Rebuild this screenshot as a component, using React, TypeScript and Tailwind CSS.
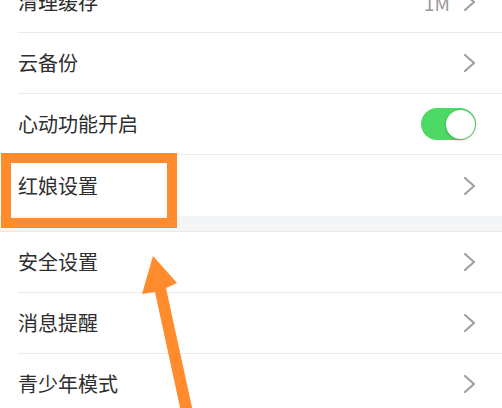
import React from 'react'

const font = { fontFamily: '"Noto Sans CJK SC", "Noto Sans", sans-serif' }

function Chevron() {
  return (
    <svg width="13" height="20" viewBox="0 0 13 20" className="shrink-0">
      <polyline points="2,2 11,10 2,18" fill="none" stroke="#a0a0a0" strokeWidth="2.2" strokeLinecap="round" strokeLinejoin="round" />
    </svg>
  )
}

function Toggle() {
  return (
    <div className="w-[55px] h-[32px] rounded-full bg-[#4cd964] p-[1.5px] flex justify-end shrink-0">
      <div className="w-[29px] h-[29px] rounded-full bg-white shadow-[0_1px_3px_rgba(0,0,0,0.25)]" />
    </div>
  )
}

function Row({ label, last, right }: { label: string; last?: boolean; right?: React.ReactNode }) {
  return (
    <div className="h-[61px] pl-[18px] bg-white">
      <div className={`h-full flex items-center justify-between pr-[26px] ${last ? '' : 'border-b border-[#ebebeb]'}`}>
        <span className="text-[20px] text-[#2e2e2e] leading-none">{label}</span>
        {right ?? <Chevron />}
      </div>
    </div>
  )
}

export default function App() {
  return (
    <div className="relative w-[502px] h-[408px] overflow-hidden bg-white" style={font}>
      <div className="-mt-[28px]">
        <Row
          label="清理缓存"
          right={
            <div className="flex items-center gap-[13px]">
              <span className="text-[19px] text-[#9a9a9a] leading-none">1M</span>
              <Chevron />
            </div>
          }
        />
        <Row label="云备份" />
        <Row label="心动功能开启" right={<Toggle />} />
        <Row label="红娘设置" last />
        <div className="h-[16px] bg-[#f4f5f6] border-b border-[#e9e9e9]" />
        <Row label="安全设置" />
        <Row label="消息提醒" />
        <Row label="青少年模式" />
      </div>

      {/* annotation box */}
      <div className="absolute left-[1px] top-[153px] w-[176px] h-[75px] border-[10px] border-[#ff8b2c]" />

      {/* annotation arrow */}
      <svg className="absolute left-0 top-0" width="502" height="408" viewBox="0 0 502 408">
        <polygon
          points="153,256 177,283 166,288 193,412 181,412 155,292 142,294"
          fill="#ff8b2c"
        />
      </svg>
    </div>
  )
}
